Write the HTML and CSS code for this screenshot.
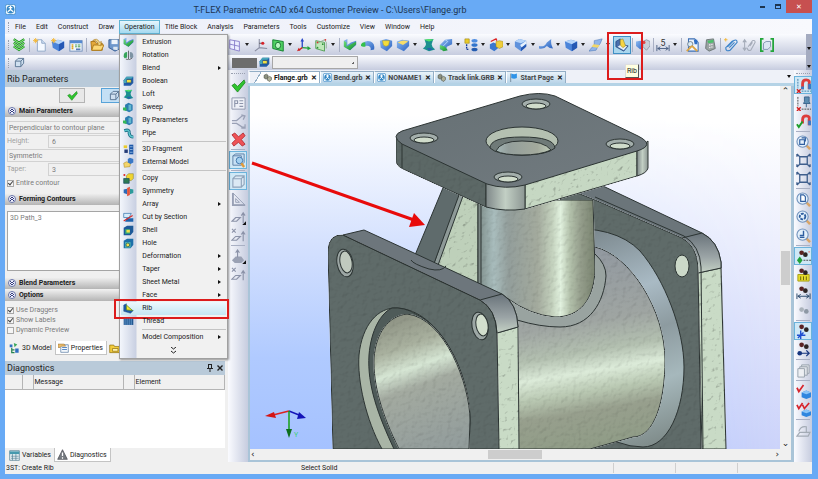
FILE: index.html
```html
<!DOCTYPE html>
<html lang="en">
<head>
  <meta charset="UTF-8" />
  <meta name="viewport" content="width=device-width, initial-scale=1.0" />
  <title>T-FLEX Parametric CAD x64 Customer Preview</title>
  <link rel="stylesheet" href="styles.css">
</head>
<body>

  <!-- icon sprite -->
  <svg class="sprite" width="0" height="0" aria-hidden="true">
    <defs>
      <linearGradient id="blueG" x1="0" y1="0" x2="1" y2="1"><stop offset="0" stop-color="#8fbcf2"/><stop offset="1" stop-color="#2a62c0"/></linearGradient>
      <linearGradient id="greenG" x1="0" y1="0" x2="1" y2="1"><stop offset="0" stop-color="#6fe07a"/><stop offset="1" stop-color="#0d8a2c"/></linearGradient>
    </defs>
    <symbol id="logo" viewBox="0 0 12 12"><rect x=".5" y=".5" width="11" height="11" rx="2" fill="#eef8ff" stroke="#4e93cc"/><circle cx="6" cy="6" r="4.300" fill="#3487c4"/><path d="M6 2v4M6 6L3 8.500M6 6l3 2.500M4 4h4" stroke="#fff" stroke-width="1.300" fill="none"/></symbol>
    <symbol id="chevrons" viewBox="0 0 16 16"><path d="M2 1.500l6 4 6-4M2 5.500l6 4 6-4M2 9.500l6 4 6-4" fill="none" stroke="#158a1b" stroke-width="2.600"/><path d="M2 1.500l6 4 6-4M2 5.500l6 4 6-4M2 9.500l6 4 6-4" fill="none" stroke="#8cec7e" stroke-width="1.200"/></symbol>
    <symbol id="newdoc" viewBox="0 0 16 16"><path d="M5 2h5l4 4v9H5z" fill="#f4f9ff" stroke="#8aa2c4"/><path d="M10 2v4h4" fill="#cfe0f4" stroke="#8aa2c4"/><path d="M3 0v6M0 3h6M1 1l4 4M5 1L1 5" stroke="#f4b52e"/></symbol>
    <symbol id="cube" viewBox="0 0 16 16"><path d="M1 4l7-2 7 2v7l-6 4-7-4z" fill="#4c85da"/><path d="M1 4l7-2 7 2-6 3z" fill="#b6d5fa"/><path d="M9 7l6-3v7l-6 4z" fill="#2558b4"/></symbol>
    <symbol id="cubecut" viewBox="0 0 16 16"><path d="M1 4l5-3 8 2v6l-6 6-7-5z" fill="#5f92dc"/><path d="M1 4l5-3 8 2-6 3z" fill="#b6d5fa"/><path d="M7 8l7-5v3l-5 5z" fill="#e6f1fd"/><path d="M8 11l6-4v3l-6 5z" fill="#2558b4"/></symbol>
    <symbol id="newcube" viewBox="0 0 16 16"><use href="#cube"/><path d="M3 0v6M0 3h6M1 1l4 4M5 1L1 5" stroke="#f4b52e"/></symbol>
    <symbol id="dialog" viewBox="0 0 16 16"><rect x="1" y="3" width="14" height="12" fill="#f1f6fd" stroke="#6d8cb8"/><path d="M1 4.500h14" stroke="#5589d0" stroke-width="3"/><path d="M3 8h2M3 10h2M3 12h2" stroke="#e0a51f" stroke-width="1.500"/><path d="M7 8h2M7 10h2M10 8h3M10 10h3" stroke="#4da052" stroke-width="1.200"/><path d="M8 13h5" stroke="#567bb5" stroke-width="2"/></symbol>
    <symbol id="open" viewBox="0 0 16 16"><path d="M1 4h5l1 2h7v8H2z" fill="#e4a93a" stroke="#a87414"/><path d="M4 8h12l-3 6H2z" fill="#fbd876" stroke="#a87414"/><path d="M3 3q5-4 8 2l2-1-1 5-4-2 1.500-1Q7 2 3 3z" fill="#f1d98c" stroke="#a87414" stroke-width=".7"/></symbol>
    <symbol id="save" viewBox="0 0 16 16"><path d="M1 2h13v10l-6 3-7-4z" fill="#6e97cb" stroke="#345a8f"/><path d="M4 2h7v5H4z" fill="#eef4fb"/><path d="M6 10h5v4l-5-1z" fill="#dbe5f0"/></symbol>
    <symbol id="plane" viewBox="0 0 16 16"><path d="M2 2l11 2v11L2 12z" fill="#eceeff" stroke="#8579c8"/><path d="M7.500 3v10.500M2 7l11 2.500" stroke="#8579c8"/></symbol>
    <symbol id="axes" viewBox="0 0 16 16"><path d="M6 1v10L1 15M6 11l9 1" fill="none" stroke="#888ca0" stroke-width="1.200"/><path d="M6 6h3" stroke="#444" stroke-width="1"/><circle cx="10" cy="6" r="1.800" fill="#d5222a"/></symbol>
    <symbol id="gplane" viewBox="0 0 16 16"><path d="M2 2l12 2v11L2 12z" fill="#4fd062" stroke="#0c7a28"/><ellipse cx="8" cy="8.500" rx="3" ry="3.600" fill="#b9f7c0" stroke="#0c6a28"/></symbol>
    <symbol id="triad" viewBox="0 0 16 16"><path d="M6 3v8" stroke="#2746c9" stroke-width="1.500"/><path d="M4 4l2-4 2 4z" fill="#2746c9"/><path d="M6 11l7 .5" stroke="#21a038" stroke-width="1.500"/><path d="M12 9l4 3-4 2z" fill="#21a038"/><path d="M6 11l-4 3" stroke="#c22" stroke-width="1.500"/><path d="M0 15l2-4 2 3z" fill="#c22"/></symbol>
    <symbol id="dots" viewBox="0 0 16 16"><path d="M2 3l10 2v10L2 12z" fill="#bfe8b9" stroke="#4e9d51"/><path d="M4 6l8-4 2 3v7" fill="none" stroke="#8cae8c"/><circle cx="4" cy="5" r="1" fill="#d33"/><circle cx="10" cy="7" r="1" fill="#2c8f3a"/><circle cx="4" cy="11" r="1" fill="#2c8f3a"/><circle cx="13" cy="2" r="1" fill="#d33"/></symbol>
    <symbol id="extrude" viewBox="0 0 16 16"><path d="M1 3l4-2v7l4-3 6-2v5l-7 6-7-4z" fill="url(#blueG)"/><path d="M1 3l3 2v5l5-3 6-3v3l-7 7-7-4z" fill="url(#greenG)"/></symbol>
    <symbol id="rotate" viewBox="0 0 16 16"><path d="M1 7q4-5 10-3 5 2 4 9l-4 1q1-6-6-5z" fill="url(#blueG)"/><path d="M0 7q2-3 5-2v5q-3 0-5-1z" fill="#35c04b"/></symbol>
    <symbol id="revolve" viewBox="0 0 16 16"><path d="M1 9q0-6 5-6v8l-4 1z" fill="#37a45a"/><path d="M15 9q0-6-5-6v8l4 1z" fill="#7d93a3"/><path d="M8 1v13M4 13l3 1M9 14l4-2" stroke="#333" fill="none"/></symbol>
    <symbol id="shieldY" viewBox="0 0 16 16"><path d="M1 3l7-2 7 2v6l-6 6-7-4z" fill="url(#blueG)"/><path d="M4 3h8l-1 5q-3 3-6 0z" fill="#f4dc3c" stroke="#aa9412" stroke-width=".5"/></symbol>
    <symbol id="shieldB" viewBox="0 0 16 16"><path d="M1 4l6-2 8 1v6l-6 6-8-4z" fill="url(#blueG)"/><path d="M2 5q5-3 9-2l3 1-6 4z" fill="#f7dd6a"/></symbol>
    <symbol id="shieldGray" viewBox="0 0 16 16"><path d="M0 4l5-1 4 2v4l-4 4-5-4z" fill="url(#blueG)"/><path d="M8 4l4-2 4 2v5l-4 5-4-4z" fill="#c9cfd8" stroke="#8e97a5"/><circle cx="9" cy="5" r="1.800" fill="#d44"/></symbol>
    <symbol id="loft" viewBox="0 0 16 16"><path d="M3 2l10-1-2 6q0 3 4 6l-7 2-7-3q5-4 3-7z" fill="#1c8f8f"/><path d="M2 2l6-1 6 1-6 2z" fill="#4fe06a"/><path d="M5 12l4-1 4 2-5 1z" fill="#2365ad"/></symbol>
    <symbol id="sweep" viewBox="0 0 16 16"><path d="M1 8l6-6 8-1v6l-6 3-1 4-7-1z" fill="url(#blueG)"/><path d="M1 8l6 2 3 4-5 1-4-3z" fill="url(#greenG)"/><path d="M7 2l3 2-5 5" fill="none" stroke="#bfe0ff"/></symbol>
    <symbol id="sweepmenu" viewBox="0 0 16 16"><path d="M3 4l5-3 6 3v8l-5 3-6-3z" fill="#2b7bb0"/><path d="M0 8h5v5l-5-1z" fill="#35b85a"/><path d="M8 4h4v8H8z" fill="#62b7cf"/></symbol>
    <symbol id="tree" viewBox="0 0 16 16"><path d="M1 1h5v5H1z" fill="#e9cb2c" stroke="#947c08" stroke-width=".6"/><path d="M3 7v6h3" fill="none" stroke="#113a9c" stroke-dasharray="2 1" stroke-width="1.500"/><ellipse cx="12" cy="3" rx="3.500" ry="2" fill="#4d8de1"/><ellipse cx="12" cy="8" rx="3.500" ry="2" fill="#3174cc"/><ellipse cx="12" cy="13" rx="3.500" ry="2" fill="#225bb0"/></symbol>
    <symbol id="cubes" viewBox="0 0 16 16"><path d="M1 7l4-2 5 2v5l-4 3-5-3z" fill="#3a77cf"/><path d="M8 4l4-1 4 1v6l-4 2-4-2z" fill="#efcd3c" stroke="#947c08" stroke-width=".5"/><path d="M2 4l6-3 1 2" stroke="#d22" fill="none" stroke-width="1.500"/></symbol>
    <symbol id="bend" viewBox="0 0 16 16"><path d="M0 9q6 2 9-4l5-4q-1 5 2 11-4 0-7-3-3 4-9 3z" fill="url(#blueG)"/></symbol>
    <symbol id="sheet" viewBox="0 0 16 16"><path d="M6 3l9-2-2 5-3 4-2 4-8 1 3-4 3-2z" fill="#8fb4e9" stroke="#4874b5" stroke-width=".6"/><path d="M5 7l7 1-2 3-7-1z" fill="#f2d768"/></symbol>
    <symbol id="boolean" viewBox="0 0 16 16"><path d="M5 1h10v9l-4 4H1V6z" fill="#225da9"/><path d="M5 5h7v5H5z" fill="#f1df42" stroke="#17427c"/><path d="M1 6l4-5h10l-3 3H5v6H1z" fill="#46a7b8"/></symbol>
    <symbol id="rib" viewBox="0 0 16 16"><path d="M1 3l4-2v7l10 3-4 4-10-3z" fill="#1f5ba7" stroke="#123a72" stroke-width=".5"/><path d="M5 3l9 8-9-1z" fill="#f6e531" stroke="#4a8a26" stroke-width="1"/></symbol>
    <symbol id="ribBig" viewBox="0 0 16 16"><path d="M1 4l5-3v6l9 2-5 6-9-5z" fill="#4a6fae" stroke="#203f77" stroke-width=".8"/><path d="M6 8l8 1-4 5-7-4z" fill="#e6eef6"/><path d="M6 2l3-1 3 8-3 2-3-3z" fill="#f6d443" stroke="#94811a" stroke-width=".6"/></symbol>
    <symbol id="thread" viewBox="0 0 16 16"><path d="M1 4h14v9H1z" fill="#20568f"/><path d="M3 4v9M6 4v9M9 4v9M12 4v9" stroke="#7db0e2"/></symbol>
    <symbol id="pipe" viewBox="0 0 16 16"><path d="M2 4q8-3 7 4 1 5 6 5" fill="none" stroke="#186f86" stroke-width="4.500"/><path d="M2 4q8-3 7 4 1 5 6 5" fill="none" stroke="#5fc6cf" stroke-width="2"/></symbol>
    <symbol id="fragment" viewBox="0 0 16 16"><path d="M9 1h6v14H9z" fill="#1c57a8"/><path d="M1 2h5v4H1z" fill="#e9cb2c"/><path d="M2 8h5v5H2z" fill="#253c78"/><path d="M10 4h4M10 8h4M10 12h4" stroke="#b9d7f3"/></symbol>
    <symbol id="external" viewBox="0 0 16 16"><path d="M1 9l4-2 6 2-1 5-8 1z" fill="#f3d56c" stroke="#a07e18" stroke-width=".7"/><path d="M7 3l3-2 5 2v5l-4 2-4-2z" fill="#3978c6"/></symbol>
    <symbol id="copy" viewBox="0 0 16 16"><path d="M5 4l3-3h7v7l-3 3H5z" fill="#efd533" stroke="#6e650e" stroke-width=".6"/><path d="M1 8h8v7H1z" fill="#2d7a54" stroke="#174c66"/><circle cx="2" cy="3" r="1.500" fill="#d22"/></symbol>
    <symbol id="symmetry" viewBox="0 0 16 16"><path d="M1 5l5-1v8l-5-2z" fill="#2c69b8"/><path d="M15 5l-5-1v8l5-2z" fill="#2c9a9a"/><path d="M6 3l4-2v12l-4 2z" fill="#e2543c"/></symbol>
    <symbol id="cut" viewBox="0 0 16 16"><path d="M1 2h11l-3 6H1z" fill="#d7ecfa" stroke="#2f70a8"/><path d="M5 9h10v5H3z" fill="#1d63ae"/><path d="M1 13L14 5" stroke="#d52a2a" stroke-width="1.800"/></symbol>
    <symbol id="shell" viewBox="0 0 16 16"><path d="M1 4l5-3h9v9l-4 5H1z" fill="#1d5a98"/><path d="M3 6h7v7H3z" fill="#2ea07c"/><path d="M5 7h5v4H5z" fill="#efe04a"/></symbol>
    <symbol id="hole" viewBox="0 0 16 16"><path d="M1 4l5-3h9v9l-4 5H1z" fill="#1d6fa8"/><path d="M3 6h8v8H3z" fill="#4fb9b2"/><circle cx="7" cy="10" r="2.700" fill="#f0e24c" stroke="#174c66"/></symbol>
    <symbol id="boxoutline" viewBox="0 0 16 16"><path d="M2 6l4-4h8v7l-4 5H2z" fill="#cfe0f0" stroke="#54708f" stroke-width="1.300"/><path d="M2 6h8v8M10 6l4-4" fill="none" stroke="#54708f" stroke-width="1.300"/></symbol>
    <symbol id="check" viewBox="0 0 16 16"><path d="M1 8l3-2 3 3 7-7 1 3-8 10z" fill="#2fc42f" stroke="#168216" stroke-width=".8"/></symbol>
    <symbol id="cross" viewBox="0 0 16 16"><path d="M1 3l3-2 4 4 5-4 2 3-4 4 4 5-3 2-4-4-5 4-2-3 4-4z" fill="#ee5257" stroke="#a91d24" stroke-width=".8"/></symbol>
    <symbol id="pe" viewBox="0 0 16 16"><path d="M1 2h14v12H1z" fill="#eef0f7" stroke="#8f96ac"/><path d="M4 12V5h3v3H4M9 5h4M9 8h4M9 11h4" fill="none" stroke="#8f96ac" stroke-width="1.200"/></symbol>
    <symbol id="branch" viewBox="0 0 16 16"><path d="M1 7h5l6-5h3M1 10h5l6 4h3M11 1l4 1-2 4M11 15h4v-4" fill="none" stroke="#9aa1b6" stroke-width="1.300"/></symbol>
    <symbol id="findbox" viewBox="0 0 16 16"><path d="M2 3h9v10H2zM2 3l3-2h9v9l-3 3" fill="#c8e1f5" stroke="#5d7fa5"/><circle cx="9" cy="8" r="3.500" fill="#a3d0f0" stroke="#4278ac"/><path d="M11 11l3 4" stroke="#e29a37" stroke-width="2.500"/></symbol>
    <symbol id="graybox" viewBox="0 0 16 16"><path d="M2 5h9v9H2zM2 5l3-3h9v9l-3 3M11 5l3-3" fill="#dbe9f4" stroke="#8fa3ba" stroke-width="1.200"/></symbol>
    <symbol id="triangle" viewBox="0 0 16 16"><path d="M2 1v13h13zM5 7v4h4z" fill="none" stroke="#98a0b5"/><path d="M2 1v13h13" fill="none" stroke="#98a0b5" stroke-width="2"/></symbol>
    <symbol id="planeup" viewBox="0 0 16 16"><path d="M1 12l4-4h5l-4 4zM13 14V4M11 6l2-3 2 3" fill="none" stroke="#8b92a8" stroke-width="1.200"/><path d="M16 12v4h-4z" fill="#111"/></symbol>
    <symbol id="planex" viewBox="0 0 16 16"><path d="M1 1l4 4M5 1L1 5M1 13l4-4h5l-4 4zM13 14V5M11 7l2-3 2 3" fill="none" stroke="#8b92a8" stroke-width="1.200"/></symbol>
    <symbol id="pyramid" viewBox="0 0 16 16"><path d="M1 12l4-4h6l3 4-3 3H4z" fill="#9aa1b4"/><path d="M7 9V2M5 4l2-3 2 3" fill="none" stroke="#8b92a8" stroke-width="1.200"/><path d="M16 12v4h-4z" fill="#111"/></symbol>
    <symbol id="docsearch" viewBox="0 0 16 16"><path d="M4 1h7l4 4v10H4z" fill="#eef5fd" stroke="#3c6fb4" stroke-width="1.200"/><path d="M10 2h4v5h-3z" fill="#2f6fc6"/><circle cx="6" cy="7" r="3" fill="#d8ecfa" stroke="#6c7b8b"/><path d="M8 9l6 6M2 15l6-6" stroke="#dda544" stroke-width="2.200"/></symbol>
    <symbol id="calc" viewBox="0 0 16 16"><path d="M4 2l8-1 2 11-7 3-4-3z" fill="#9aa2a2" stroke="#687272"/><path d="M5 3l7-1v3l-6 1z" fill="#4cbf6b"/><path d="M7 8l5-1M7 11l5-1" stroke="#eee" stroke-dasharray="1.500 1" stroke-width="1.500"/></symbol>
    <symbol id="clip" viewBox="0 0 16 16"><path d="M4 10l7-7q4-2 4 2l-8 9q-5 2-5-3l8-8M6 11l6-6" fill="none" stroke="#3d84c9" stroke-width="1.300"/><path d="M2 0v4M0 2h4" stroke="#f4b52e"/></symbol>
    <symbol id="clipgray" viewBox="0 0 16 16"><path d="M7 10l5-7q3-1 3 2l-5 9q-4 1-4-3M9 9l3-4M3 2v12M1 5l2-3 2 3M1 11l2 3 2-3" fill="none" stroke="#a5acb9" stroke-width="1.200"/></symbol>
    <symbol id="bracket" viewBox="0 0 16 16"><path d="M4 1H1v14h3M12 1h3v14h-3" fill="none" stroke="#22a53a" stroke-width="2"/><path d="M4 6l3-2h5v6l-3 3H4z" fill="#dce6f2" stroke="#7c90ac"/></symbol>
    <symbol id="magnet" viewBox="0 0 16 16"><path d="M7 12V6q0-4 4-4t3 4v6" fill="none" stroke="#dd3c3c" stroke-width="3"/><path d="M14.500 6v6M7 9v3" stroke="#3b79c4" stroke-width="3"/><path d="M2 1v10M6 14h10" stroke="#3a77a8" stroke-dasharray="2 1"/><path d="M1 12l4 4M5 12l-4 4" stroke="#d32020" stroke-width="1.500"/></symbol>
    <symbol id="pin" viewBox="0 0 16 16"><path d="M9 1h5v5l1 2H8l1-2zM11 8v4" fill="#5b8bb0" stroke="#3b658d"/><path d="M2 1v10M6 14h10" stroke="#444" stroke-dasharray="2 1"/><path d="M1 12l4 4M5 12l-4 4" stroke="#d32020" stroke-width="1.500"/></symbol>
    <symbol id="magnetok" viewBox="0 0 16 16"><path d="M7 10V6q0-4 4-4t3 4v6" fill="none" stroke="#dd3c3c" stroke-width="3"/><path d="M14.500 7v5" stroke="#3b79c4" stroke-width="3"/><path d="M1 11l2 3 4-6" fill="none" stroke="#1d9f2a" stroke-width="2"/></symbol>
    <symbol id="lens" viewBox="0 0 16 16"><path d="M10 10l5 5" stroke="#d9a568" stroke-width="2.600"/><circle cx="7" cy="7" r="6" fill="#e4f0fb" stroke="#7293bd" stroke-width="1.200"/></symbol>
    <symbol id="zoom" viewBox="0 0 16 16"><use href="#lens"/><path d="M4 5h5v5H4zM6 3h4v4" fill="none" stroke="#2f5ea0" stroke-width="1.200"/></symbol>
    <symbol id="zoompage" viewBox="0 0 16 16"><use href="#lens"/><path d="M5 3h3l2 2v5H5z" fill="#fff" stroke="#2f5ea0" stroke-width="1.200"/></symbol>
    <symbol id="zoomgear" viewBox="0 0 16 16"><use href="#lens"/><circle cx="7" cy="7" r="3" fill="none" stroke="#2f5ea0" stroke-width="2" stroke-dasharray="3 1"/></symbol>
    <symbol id="zoomback" viewBox="0 0 16 16"><use href="#lens"/><path d="M8 3v5H4M4 10h5" fill="none" stroke="#2f5ea0" stroke-width="1.500"/></symbol>
    <symbol id="fit" viewBox="0 0 16 16"><path d="M4 4h8v8H4zM1 1l3 3M15 1l-3 3M1 15l3-3M15 15l-3-3M1 4V1M15 1v3M1 12v3M15 15v-3" fill="none" stroke="#3f5f8d" stroke-width="1.400"/></symbol>
    <symbol id="snap" viewBox="0 0 16 16"><circle cx="6" cy="4" r="2.500" fill="#5b2323"/><circle cx="10" cy="6" r="2.500" fill="#2c2424"/><path d="M8 12h8" stroke="#444" stroke-dasharray="2 1"/><path d="M4 8l3 4-3 4-3-4z" fill="#21a23a"/><circle cx="14" cy="3" r="1" fill="#e48a8a"/></symbol>
    <symbol id="snapyel" viewBox="0 0 16 16"><path d="M2 8h12v7H2z" fill="#e7dc2a" stroke="#a89f16"/><circle cx="6" cy="4" r="2.500" fill="#5b2323"/><circle cx="10" cy="6" r="2.500" fill="#2c2424"/><path d="M5 10v4M8 10v4M11 10v4" stroke="#665f08"/></symbol>
    <symbol id="snapdim" viewBox="0 0 16 16"><circle cx="6" cy="4" r="2.500" fill="#5b2323"/><circle cx="10" cy="6" r="2.500" fill="#2c2424"/><path d="M1 9v6M15 9v6M2 12h12M5 10l-3 2 3 2M11 10l3 2-3 2" fill="none" stroke="#244468"/></symbol>
    <symbol id="snapgray" viewBox="0 0 16 16"><circle cx="6" cy="7" r="2.500" fill="#aab2ba"/><circle cx="11" cy="9" r="2.500" fill="#8d98a4"/></symbol>
    <symbol id="snapaxis" viewBox="0 0 16 16"><circle cx="6" cy="3" r="2.500" fill="#5b2323"/><circle cx="11" cy="6" r="2.500" fill="#2c2424"/><path d="M1 12h9M5 7v9M2 15l6-6" stroke="#1f4fd1" stroke-width="1.500"/></symbol>
    <symbol id="snaparrow" viewBox="0 0 16 16"><circle cx="6" cy="3" r="2.500" fill="#5b2323"/><circle cx="11" cy="5" r="2.500" fill="#2c2424"/><circle cx="4" cy="12" r="2.500" fill="#16357e"/><path d="M5 12h9M11 9l3 3-3 3" fill="none" stroke="#16357e" stroke-width="1.300"/></symbol>
    <symbol id="stack" viewBox="0 0 16 16"><path d="M6 2h8v9H6z" fill="#dfe3e8" stroke="#98a1ac"/><path d="M4 4h8v9H4z" fill="#dfe3e8" stroke="#98a1ac"/><path d="M2 6h7v9H2z" fill="#eef0f3" stroke="#98a1ac"/></symbol>
    <symbol id="verify" viewBox="0 0 16 16"><path d="M1 4l2 4 5-7" fill="none" stroke="#d6242c" stroke-width="1.800"/><path d="M6 9l5-2 5 2v5l-5 2-5-2z" fill="#2f86df"/><path d="M6 9l5-2 5 2-5 2z" fill="#8bc4f7"/></symbol>
    <symbol id="verify2" viewBox="0 0 16 16"><path d="M1 3l2 4 4-6M7 3l2 4 5-6" fill="none" stroke="#d6242c" stroke-width="1.800"/><path d="M6 10l5-2 5 2v4l-5 2-5-2z" fill="#2f86df"/><path d="M6 10l5-2 5 2-5 2z" fill="#8bc4f7"/></symbol>
    <symbol id="workplane" viewBox="0 0 16 16"><path d="M1 14l3-4h11l-2 4zM3 9q2-6 8-5v6" fill="none" stroke="#a3abb5" stroke-width="1.200"/></symbol>
    <symbol id="table" viewBox="0 0 16 16"><path d="M1 1h14v14H1z" fill="#edf5f8" stroke="#47778e"/><path d="M1 4h14" stroke="#4599ae" stroke-width="4"/><path d="M5 6v9M10 6v9M3 9h11M3 12h11" stroke="#4e7c90"/></symbol>
    <symbol id="warning" viewBox="0 0 16 16"><path d="M8 1l7 14H1z" fill="#777c82" stroke="#44484d"/><path d="M8 5v5M8 12v2" stroke="#fff" stroke-width="1.800"/></symbol>
    <symbol id="model" viewBox="0 0 16 16"><path d="M1 2h4v4H1zM9 8h5v6H9z" fill="#2f6fc0"/><path d="M4 7v7h4M4 10h4" fill="none" stroke="#27844f" stroke-width="1.800"/><path d="M7 0l5 2-4 4z" fill="#3ba65b"/></symbol>
    <symbol id="props" viewBox="0 0 16 16"><path d="M4 4h11v11H4z" fill="#f4f8fd" stroke="#54779f"/><path d="M6 8h7M6 11h7" stroke="#5b8bc5" stroke-width="1.500"/><path d="M0 3h9l2 3H5L3 8H0z" fill="#eabc6c" stroke="#93682a" stroke-width=".7"/></symbol>
    <symbol id="library" viewBox="0 0 16 16"><path d="M1 3h6l1 2h7v9H1z" fill="#f3cd3c" stroke="#8d6e0c"/><path d="M5 8h8v4H5z" fill="#fff3ae" stroke="#8d6e0c"/></symbol>
    <symbol id="parts" viewBox="0 0 16 16"><path d="M2 4l4-2 3 2v4l-3 3-4-2z" fill="#8d9180" stroke="#44483c"/><path d="M8 8l4-2 3 2v4l-3 3-4-2z" fill="#b0b19a" stroke="#44483c"/></symbol>
    <symbol id="flag" viewBox="0 0 16 16"><path d="M3 1v15" stroke="#6d8295" stroke-width="1.500"/><path d="M4 1q5 2 10 0v8q-5 2-10 0z" fill="#2e93e8"/></symbol>
  </svg>

  <header class="titlebar">
    <svg class="icon small"><use href="#logo"/></svg>
    <h1>T-FLEX Parametric CAD x64 Customer Preview - C:\Users\Flange.grb</h1>
    <div class="window-buttons">
      <button type="button" aria-label="Minimize"><i class="min"></i></button>
      <button type="button" aria-label="Maximize"><i class="max"></i></button>
      <button type="button" class="close" aria-label="Close">✕</button>
    </div>
  </header>

  <nav class="menubar">
    <i class="grip"></i>
    <button type="button">File</button>
    <button type="button">Edit</button>
    <button type="button">Construct</button>
    <button type="button">Draw</button>
    <div class="menu-holder">
      <button type="button" class="open">Operation</button>
      <div class="menu">
        <button type="button"><svg class="icon"><use href="#extrude"/></svg>Extrusion</button>
        <button type="button"><svg class="icon"><use href="#revolve"/></svg>Rotation</button>
        <button type="button" class="sub">Blend</button>
        <button type="button"><svg class="icon"><use href="#boolean"/></svg>Boolean</button>
        <button type="button"><svg class="icon"><use href="#loft"/></svg>Loft</button>
        <button type="button"><svg class="icon"><use href="#sweepmenu"/></svg>Sweep</button>
        <button type="button"><svg class="icon"><use href="#sweepmenu"/></svg>By Parameters</button>
        <button type="button"><svg class="icon"><use href="#pipe"/></svg>Pipe</button>
        <hr>
        <button type="button"><svg class="icon"><use href="#fragment"/></svg>3D Fragment</button>
        <button type="button"><svg class="icon"><use href="#external"/></svg>External Model</button>
        <hr>
        <button type="button"><svg class="icon"><use href="#copy"/></svg>Copy</button>
        <button type="button"><svg class="icon"><use href="#symmetry"/></svg>Symmetry</button>
        <button type="button" class="sub">Array</button>
        <button type="button"><svg class="icon"><use href="#cut"/></svg>Cut by Section</button>
        <button type="button"><svg class="icon"><use href="#shell"/></svg>Shell</button>
        <button type="button"><svg class="icon"><use href="#hole"/></svg>Hole</button>
        <button type="button" class="sub">Deformation</button>
        <button type="button" class="sub">Taper</button>
        <button type="button" class="sub">Sheet Metal</button>
        <button type="button" class="sub">Face</button>
        <button type="button" class="current"><svg class="icon"><use href="#rib"/></svg>Rib</button>
        <button type="button"><svg class="icon"><use href="#thread"/></svg>Thread</button>
        <hr>
        <button type="button" class="sub">Model Composition</button>
        <button type="button" class="more" aria-label="More"><svg width="5" height="7" viewBox="0 0 5 7"><path d="M0 0l2.500 2L5 0M0 4l2.500 2L5 4" fill="none" stroke="#222"/></svg></button>
      </div>
    </div>
    <button type="button">Title Block</button>
    <button type="button">Analysis</button>
    <button type="button">Parameters</button>
    <button type="button">Tools</button>
    <button type="button">Customize</button>
    <button type="button">View</button>
    <button type="button">Window</button>
    <button type="button">Help</button>
  </nav>

  <div class="toolbar main-tools">
    <i class="grip"></i>
    <button type="button"><svg class="icon"><use href="#chevrons"/></svg></button>
    <i class="sep"></i>
    <button type="button"><svg class="icon"><use href="#newdoc"/></svg></button>
    <button type="button"><svg class="icon"><use href="#newcube"/></svg></button>
    <button type="button"><svg class="icon"><use href="#dialog"/></svg></button>
    <i class="sep"></i>
    <button type="button"><svg class="icon"><use href="#open"/></svg></button>
    <button type="button"><svg class="icon"><use href="#save"/></svg></button>
    <i class="sep"></i>
    <button type="button"><svg class="icon"><use href="#copy"/></svg></button>
    <button type="button"><svg class="icon"><use href="#clip"/></svg></button>
    <button type="button"><svg class="icon"><use href="#table"/></svg></button>
    <button type="button"><svg class="icon"><use href="#docsearch"/></svg></button>
    <button type="button" class="drop"><svg class="icon"><use href="#boxoutline"/></svg></button>
    <i class="sep"></i>
    <button type="button" class="drop"><svg class="icon"><use href="#plane"/></svg></button>
    <button type="button"><svg class="icon"><use href="#axes"/></svg></button>
    <button type="button" class="drop"><svg class="icon"><use href="#gplane"/></svg></button>
    <button type="button"><svg class="icon"><use href="#triad"/></svg></button>
    <button type="button" class="drop"><svg class="icon"><use href="#dots"/></svg></button>
    <i class="sep"></i>
    <button type="button"><svg class="icon"><use href="#extrude"/></svg></button>
    <button type="button"><svg class="icon"><use href="#rotate"/></svg></button>
    <button type="button"><svg class="icon"><use href="#shieldY"/></svg></button>
    <button type="button" class="drop"><svg class="icon"><use href="#shieldB"/></svg></button>
    <button type="button"><svg class="icon"><use href="#loft"/></svg></button>
    <button type="button" class="drop"><svg class="icon"><use href="#sweep"/></svg></button>
    <button type="button" class="drop"><svg class="icon"><use href="#tree"/></svg></button>
    <button type="button" class="drop"><svg class="icon"><use href="#cubes"/></svg></button>
    <button type="button" class="drop"><svg class="icon"><use href="#cubecut"/></svg></button>
    <button type="button" class="drop"><svg class="icon"><use href="#bend"/></svg></button>
    <button type="button" class="drop"><svg class="icon"><use href="#cube"/></svg></button>
    <button type="button" class="drop"><svg class="icon"><use href="#sheet"/></svg></button>
    <div class="rib-tool">
      <button type="button" class="on" aria-describedby="ribTip"><svg class="icon"><use href="#ribBig"/></svg></button>
      <div class="callout"></div>
      <span class="tooltip" id="ribTip">Rib</span>
    </div>
    <i class="sep"></i>
    <button type="button"><svg class="icon"><use href="#shieldGray"/></svg></button>
    <i class="sep"></i>
    <button type="button" class="drop"><svg class="icon" viewBox="0 0 16 16"><path d="M1 8v7M15 8v7M2 12h12M5 10l-3 2 3 2M11 10l3 2-3 2" fill="none" stroke="#44597e"/><text x="5" y="9" font-size="10" fill="#333">5</text></svg></button>
    <i class="sep"></i>
    <button type="button"><svg class="icon"><use href="#docsearch"/></svg></button>
    <button type="button"><svg class="icon"><use href="#calc"/></svg></button>
    <i class="sep"></i>
    <button type="button"><svg class="icon"><use href="#clip"/></svg></button>
    <button type="button"><svg class="icon"><use href="#clipgray"/></svg></button>
    <button type="button"><svg class="icon"><use href="#bracket"/></svg></button>
    <button type="button" class="overflow" aria-label="Toolbar options"></button>
  </div>

  <div class="toolbar sub-tools">
    <i class="grip"></i>
    <button type="button"><svg class="icon small"><use href="#boxoutline"/></svg></button>
    <div class="style-tools">
      <span class="swatch"></span>
      <svg class="icon small"><use href="#boolean"/></svg>
      <select aria-label="Material"><option></option></select>
    </div>
    <button type="button" class="overflow" aria-label="Toolbar options"></button>
  </div>

  <main class="workspace">
    <aside class="dock">
      <section class="panel properties">
        <h2>Rib Parameters</h2>
        <div class="actions">
          <button type="button" aria-label="OK"><svg class="icon small"><use href="#check"/></svg></button>
          <button type="button" class="on" aria-label="Preview"><svg class="icon small"><use href="#boxoutline"/></svg></button>
        </div>
        <h3><svg class="fold" viewBox="0 0 8 8"><circle cx="4" cy="4" r="3.500"/><path d="M2 4l2-2 2 2M2 6l2-2 2 2"/></svg>Main Parameters</h3>
        <div class="fields">
          <select aria-label="Direction"><option>Perpendicular to contour plane</option></select>
          <div class="field"><label for="height">Height:</label><input id="height" type="text" value="6"></div>
          <select aria-label="Side"><option>Symmetric</option></select>
          <div class="field"><label for="taper">Taper:</label><input id="taper" type="text" value="3"></div>
          <label class="check"><input type="checkbox" checked>Entire contour</label>
        </div>
        <h3><svg class="fold" viewBox="0 0 8 8"><circle cx="4" cy="4" r="3.500"/><path d="M2 4l2-2 2 2M2 6l2-2 2 2"/></svg>Forming Contours</h3>
        <ul class="contours"><li>3D Path_3</li></ul>
        <h3><svg class="fold" viewBox="0 0 8 8"><circle cx="4" cy="4" r="3.500"/><path d="M2 2l2 2 2-2M2 4l2 2 2-2"/></svg>Blend Parameters</h3>
        <h3><svg class="fold" viewBox="0 0 8 8"><circle cx="4" cy="4" r="3.500"/><path d="M2 4l2-2 2 2M2 6l2-2 2 2"/></svg>Options</h3>
        <div class="options">
          <label class="check"><input type="checkbox" checked>Use Draggers</label>
          <label class="check"><input type="checkbox" checked>Show Labels</label>
          <label class="check"><input type="checkbox">Dynamic Preview</label>
        </div>
        <div class="panel-tabs">
          <button type="button"><svg class="icon small"><use href="#model"/></svg>3D Model</button>
          <button type="button" class="active"><svg class="icon small"><use href="#props"/></svg>Properties</button>
          <button type="button"><svg class="icon small"><use href="#library"/></svg>Library</button>
        </div>
      </section>

      <section class="panel diagnostics">
        <h2>Diagnostics
          <span class="panel-buttons">
            <svg width="6" height="8" viewBox="0 0 6 8"><path d="M1.500 0v4M4.500 0v4M1 .5h4M0 4.500h6M3 5v3" stroke="#222" fill="none"/></svg>
            <svg width="6" height="6" viewBox="0 0 6 6"><path d="M.5 .5l5 5M5.500 .5l-5 5" stroke="#222" stroke-width="1.400"/></svg>
          </span>
        </h2>
        <table>
          <colgroup><col class="c1"><col class="c2"><col class="c3"><col class="c2"><col></colgroup>
          <thead><tr><th></th><th></th><th>Message</th><th></th><th>Element</th></tr></thead>
        </table>
        <div class="messages"></div>
        <div class="panel-tabs">
          <button type="button"><svg class="icon small"><use href="#table"/></svg>Variables</button>
          <button type="button" class="active"><svg class="icon small"><use href="#warning"/></svg>Diagnostics</button>
        </div>
      </section>
    </aside>

    <div class="side-tools left">
      <i class="grip"></i>
      <button type="button"><svg class="icon"><use href="#check"/></svg></button>
      <button type="button"><svg class="icon"><use href="#pe"/></svg></button>
      <button type="button"><svg class="icon"><use href="#branch"/></svg></button>
      <button type="button"><svg class="icon"><use href="#cross"/></svg></button>
      <i class="sep"></i>
      <button type="button" class="on"><svg class="icon"><use href="#findbox"/></svg></button>
      <i class="sep"></i>
      <button type="button" class="on"><svg class="icon"><use href="#graybox"/></svg></button>
      <button type="button"><svg class="icon"><use href="#triangle"/></svg></button>
      <button type="button"><svg class="icon"><use href="#planeup"/></svg></button>
      <button type="button"><svg class="icon"><use href="#planex"/></svg></button>
      <i class="sep"></i>
      <button type="button"><svg class="icon"><use href="#pyramid"/></svg></button>
      <button type="button"><svg class="icon"><use href="#planex"/></svg></button>
    </div>

    <section class="document">
      <div class="tabs">
        <button type="button" class="active"><svg class="icon tiny"><use href="#parts"/></svg>Flange.grb<b>✕</b></button>
        <button type="button"><svg class="icon tiny"><use href="#logo"/></svg>Bend.grb<b>✕</b></button>
        <button type="button"><svg class="icon tiny"><use href="#logo"/></svg>NONAME1<b>✕</b></button>
        <button type="button"><svg class="icon tiny"><use href="#parts"/></svg>Track link.GRB<b>✕</b></button>
        <button type="button"><svg class="icon tiny"><use href="#flag"/></svg>Start Page<b>✕</b></button>
        <i class="caret"></i>
      </div>

      <div class="view">
        <svg class="scene" viewBox="250 86 530 363" preserveAspectRatio="xMidYMid slice" role="img" aria-label="3D view of the flange">
          <defs>
            <linearGradient id="sky" x1="0" y1="0" x2="0" y2="1"><stop offset=".08" stop-color="#fff"/><stop offset=".45" stop-color="#d3e0fe"/><stop offset=".75" stop-color="#b0caff"/><stop offset="1" stop-color="#a5c2ff"/></linearGradient>
            <linearGradient id="skyRight" x1="0" y1="0" x2="0" y2="1"><stop offset=".1" stop-color="#fff"/><stop offset=".6" stop-color="#e3e6fc"/><stop offset="1" stop-color="#ccd3fa"/></linearGradient>
            <linearGradient id="neck" x1="480" y1="0" x2="595" y2="0" gradientUnits="userSpaceOnUse"><stop offset="0" stop-color="#82928f"/><stop offset=".12" stop-color="#a9bdbd"/><stop offset=".25" stop-color="#939e9b"/><stop offset=".5" stop-color="#a3aa9d"/><stop offset=".63" stop-color="#c4d2be"/><stop offset=".7" stop-color="#e2f2df"/><stop offset=".78" stop-color="#b4c2ac"/><stop offset=".88" stop-color="#939c8a"/><stop offset="1" stop-color="#79836f"/></linearGradient>
            <linearGradient id="body" x1="570" y1="255" x2="602" y2="449" gradientUnits="userSpaceOnUse"><stop offset="0" stop-color="#9299a0"/><stop offset=".35" stop-color="#9fa5a2"/><stop offset=".5" stop-color="#b3c0b0"/><stop offset=".6" stop-color="#dcebd9"/><stop offset=".7" stop-color="#b9c8b2"/><stop offset=".8" stop-color="#979f8d"/><stop offset="1" stop-color="#8f9c86"/></linearGradient>
            <linearGradient id="bore" x1="395" y1="318" x2="440" y2="449" gradientUnits="userSpaceOnUse"><stop offset="0" stop-color="#8f9485"/><stop offset=".22" stop-color="#a9b19f"/><stop offset=".38" stop-color="#d6e6d4"/><stop offset=".52" stop-color="#a3aaa0"/><stop offset="1" stop-color="#939d9c"/></linearGradient>
            <linearGradient id="flare" x1="600" y1="230" x2="680" y2="440" gradientUnits="userSpaceOnUse"><stop offset="0" stop-color="#7d8a90"/><stop offset=".3" stop-color="#a9bac4"/><stop offset=".5" stop-color="#8d9ba0"/><stop offset=".72" stop-color="#a6b8bc"/><stop offset="1" stop-color="#7c8886"/></linearGradient>
            <linearGradient id="corner"><stop offset="0" stop-color="#7f8889"/><stop offset=".5" stop-color="#c2cfc4"/><stop offset="1" stop-color="#8c9693"/></linearGradient>
            <linearGradient id="cornerV" x1="0" y1="0" x2="0" y2="1"><stop offset="0" stop-color="#69737a"/><stop offset=".6" stop-color="#9ba4a6"/><stop offset="1" stop-color="#c5d2c5"/></linearGradient>
            <linearGradient id="topFace" x1="0" y1="0" x2="1" y2="1"><stop offset="0" stop-color="#667074"/><stop offset="1" stop-color="#727b80"/></linearGradient>
            <filter id="rough" x="0" y="0" width="100%" height="100%" color-interpolation-filters="sRGB">
              <feTurbulence type="fractalNoise" baseFrequency=".2" numOctaves="3" seed="4" result="n"/>
              <feDiffuseLighting in="n" surfaceScale="1.100" diffuseConstant="1.250" lighting-color="#fff" result="l"><feDistantLight azimuth="230" elevation="60"/></feDiffuseLighting>
              <feBlend in="SourceGraphic" in2="l" mode="multiply" result="b"/>
              <feComposite in="b" in2="SourceGraphic" operator="in"/>
            </filter>
            <filter id="grain" x="0" y="0" width="100%" height="100%" color-interpolation-filters="sRGB">
              <feTurbulence type="fractalNoise" baseFrequency=".2" numOctaves="2" seed="9" result="n"/>
              <feDiffuseLighting in="n" surfaceScale=".35" diffuseConstant="1.150" lighting-color="#fff" result="l"><feDistantLight azimuth="230" elevation="60"/></feDiffuseLighting>
              <feBlend in="SourceGraphic" in2="l" mode="multiply" result="b"/>
              <feComposite in="b" in2="SourceGraphic" operator="in"/>
            </filter>
            <linearGradient id="fadeIn" x1="0" x2="1"><stop offset=".35" stop-color="#fff" stop-opacity="0"/><stop offset="1" stop-color="#fff"/></linearGradient>
            <mask id="rightMask"><rect x="250" y="86" width="530" height="363" fill="url(#fadeIn)"/></mask>
          </defs>
          <rect x="250" y="86" width="530" height="363" fill="url(#sky)"/>
          <rect x="250" y="86" width="530" height="363" fill="url(#skyRight)" mask="url(#rightMask)"/>

          <g class="edges">
            <!-- rear flange -->
            <path d="M593 182L605 187 702 233Q718 241 721 262L726 449H701L698 267 570 200z" fill="#6b757a"/>
            <path d="M698 273L721 268 726 449H702z" fill="#c9dbc6" filter="url(#rough)"/>
            <path d="M682 238L702 233Q718 241 721 262L721 268 698 273Q697 248 682 238z" fill="url(#cornerV)"/>
            <path d="M560 186L595 200 682 238Q697 246 698 267L701 449H560z" fill="#5f6b69" filter="url(#grain)"/>
            <path d="M595 197L684 236Q700 246 701 267L703 449" fill="none"/>
            <ellipse cx="682" cy="266" rx="7" ry="11" fill="#cbd8c8"/>
            <!-- body -->
            <path d="M560 229Q615 225 640 251C665 280 684 330 684 367C684 410 668 447 643 447Q630 447 617 442L560 449z" fill="url(#flare)"/>
            <path d="M500 247H595C630 255 665 310 665 360C665 400 655 437 633 437L590 449H500z" fill="url(#body)" filter="url(#grain)"/>
            <!-- neck -->
            <path d="M560 254H595Q606 264 606 276C604 302 590 327 560 327Q540 327 517 320L480 290V254z" fill="#99a3a0" stroke="none"/>
            <path d="M595 254Q606 264 606 276C604 302 590 327 560 327Q540 327 517 320" fill="none"/>
            <path d="M478 200H593L595 270C594 300 580 317 555 317Q530 315 507 298L478 284z" fill="url(#neck)" filter="url(#grain)"/>
            <!-- rib -->
            <path d="M462 194L478 200V284L430 264z" fill="#bed0ba" filter="url(#rough)"/>
            <path d="M478 200h3v86l-3-2z" fill="#7c8885"/>
            <path d="M458 194L463 196 437 268 432 269z" fill="#8e9a98"/>
            <path d="M445 183L459 195 432 269 413 260z" fill="#5f6b6c"/>
            <!-- front flange -->
            <path d="M343 235L364 230 414 253 502 294Q517 303 518 327L519 449H499L497 333 480 300z" fill="#6d767c"/>
            <path d="M497 333L518 327 519 449H499z" fill="#c9dbc6" filter="url(#rough)"/>
            <path d="M480 300L502 294Q517 303 518 327L497 333Q496 310 480 300z" fill="url(#cornerV)"/>
            <path d="M328 250Q329 234 343 235L480 300Q496 309 497 333L499 449H333z" fill="#5f6b69" filter="url(#grain)"/>
            <path d="M343 235L480 300Q496 309 497 333" fill="none"/>
            <path d="M411 260Q413 264 429 269 442 272 446 266" fill="none"/>
            <path d="M382 449C366 420 357 380 359 355C362 325 378 307 397 308C440 310 470 375 470 420L469 449z" fill="#a9b5a6"/>
            <path d="M394 449C378 415 367 385 369 355C371 330 381 313 392 308Q404 307 416 314C450 330 470 385 470 420L469 449z" fill="#4f5b59"/>
            <path d="M399 449C382 415 373 385 374 358C376 333 388 316 407 314C445 318 470 385 470 420L469 449z" fill="url(#bore)" filter="url(#grain)"/>
            <ellipse cx="345" cy="263" rx="8" ry="14" transform="rotate(-10 345 263)" fill="#9da7a5"/>
            <ellipse cx="346" cy="262" rx="6" ry="11" transform="rotate(-10 346 262)" fill="#c0cabf"/>
            <ellipse cx="480" cy="326" rx="8" ry="14" transform="rotate(-10 480 326)" fill="#9da7a5"/>
            <ellipse cx="482" cy="325" rx="6" ry="11" transform="rotate(-10 482 325)" fill="#d2decd"/>
            <!-- top flange -->
            <path d="M396 138V160Q396 166 403 169L486 207V182z" fill="#5c6866" filter="url(#grain)"/>
            <path d="M402 144V168" fill="none"/>
            <path d="M525 183L637 150V176L525 209z" fill="#c6d8c3" filter="url(#rough)"/>
            <path d="M637 150L648 141V168Q647 173 637 176z" fill="url(#corner)"/>
            <path d="M486 182H525V209Q505 212 486 207z" fill="url(#corner)"/>
            <path d="M402 131L520 96Q540 91 555 96L638 136Q656 145 637 151L525 185Q505 190 487 184L402 144Q390 136 402 131z" fill="url(#topFace)"/>
            <ellipse cx="522" cy="141" rx="36" ry="14" fill="#b4c0b1"/>
            <path d="M490 148Q490 137 522 137T555 148Q547 155 522 155T490 148z" fill="#6f7a78"/>
            <path d="M496 151Q500 141 522 141T551 150Q540 155 522 155T496 151z" fill="url(#neck)"/>
            <g fill="#a3aeab">
              <ellipse cx="424" cy="138" rx="14" ry="5"/><ellipse cx="536" cy="104" rx="14" ry="5"/><ellipse cx="620" cy="144" rx="14" ry="5"/><ellipse cx="508" cy="177" rx="14" ry="5"/>
            </g>
            <g fill="#d0dccb">
              <ellipse cx="424" cy="140" rx="10" ry="3"/><ellipse cx="536" cy="106" rx="10" ry="3"/><ellipse cx="620" cy="146" rx="10" ry="3"/><ellipse cx="508" cy="179" rx="10" ry="3"/>
            </g>
          </g>

          <path d="M252 163L414 220" stroke="#e80b0b" stroke-width="3"/>
          <path d="M425 225L409 227 414 213z" fill="#e80b0b"/>

          <path d="M289 411L273 415" stroke="#d22" stroke-width="1.500"/><path d="M265 416l9-4 2 6z" fill="#d41414"/>
          <path d="M289 411L299 415" stroke="#1414b8" stroke-width="1.500"/><path d="M306 418l-9 1 2-7z" fill="#1414b8"/>
          <path d="M289 411V430" stroke="#14a014" stroke-width="1.500"/><path d="M289 438l-3-9h6z" fill="#0c6e1c"/>
          <text x="294" y="437" font-size="7" fill="#3fd07c">Y</text>
        </svg>
        <div class="scroll vertical"><span>⌃</span><i></i><span>⌄</span></div>
        <div class="scroll horizontal"><span>‹</span><i></i><span>›</span></div>
      </div>
    </section>

    <div class="side-tools right">
      <i class="grip"></i>
      <button type="button" class="on"><svg class="icon"><use href="#magnet"/></svg></button>
      <button type="button"><svg class="icon"><use href="#pin"/></svg></button>
      <button type="button"><svg class="icon"><use href="#magnetok"/></svg></button>
      <i class="sep"></i>
      <button type="button"><svg class="icon"><use href="#zoom"/></svg></button>
      <button type="button"><svg class="icon"><use href="#fit"/></svg></button>
      <button type="button"><svg class="icon"><use href="#fit"/></svg></button>
      <i class="sep"></i>
      <button type="button"><svg class="icon"><use href="#zoompage"/></svg></button>
      <button type="button"><svg class="icon"><use href="#zoomgear"/></svg></button>
      <button type="button"><svg class="icon"><use href="#zoomback"/></svg></button>
      <i class="sep"></i>
      <button type="button" class="on"><svg class="icon"><use href="#snap"/></svg></button>
      <button type="button"><svg class="icon"><use href="#snapyel"/></svg></button>
      <button type="button"><svg class="icon"><use href="#snapdim"/></svg></button>
      <button type="button"><svg class="icon"><use href="#snapgray"/></svg></button>
      <i class="sep"></i>
      <button type="button" class="on"><svg class="icon"><use href="#snapaxis"/></svg></button>
      <button type="button"><svg class="icon"><use href="#snaparrow"/></svg></button>
      <i class="sep"></i>
      <button type="button"><svg class="icon"><use href="#stack"/></svg></button>
      <i class="sep"></i>
      <button type="button"><svg class="icon"><use href="#verify"/></svg></button>
      <button type="button"><svg class="icon"><use href="#verify2"/></svg></button>
      <i class="sep"></i>
      <button type="button"><svg class="icon"><use href="#workplane"/></svg></button>
    </div>
  </main>

  <footer class="statusbar">
    <span class="mode">3ST: Create Rib</span>
    <span class="hint">Select Solid</span>
    <span class="cell"></span>
    <span class="cell"></span>
    <span class="cell last"></span>
  </footer>

</body>
</html>
```

FILE: styles.css
```css
* {
  box-sizing: border-box;
}

body {
  margin: 0;
  padding: 0 6px 5px 5px;
  min-height: 100vh;
  display: flex;
  flex-direction: column;
  background-color: #68aaf5;
  font-family: Roboto, 'Liberation Sans', sans-serif;
  font-size: 7px;
  line-height: 12px;
  color: #1a1a1a;
}

button,
input,
select {
  font: inherit;
  color: inherit;
  margin: 0;
  padding: 0;
  border: 0;
  border-radius: 0;
  background: none;
}

button {
  display: flex;
  align-items: center;
  white-space: nowrap;
}

h1, h2, h3, ul {
  margin: 0;
  padding: 0;
  font-weight: normal;
}

.sprite {
  position: absolute;
}

.icon {
  width: 15px;
  height: 15px;
  flex: none;
}

.icon.small {
  width: 11px;
  height: 11px;
}

.icon.tiny {
  width: 9px;
  height: 9px;
}

/* title bar */
.titlebar {
  display: flex;
  align-items: center;
  height: 19px;
}

.titlebar h1 {
  flex: 1;
  padding-right: 110px;
  text-align: center;
  font-size: 9px;
  color: #1d3550;
}

.window-buttons {
  display: flex;
  align-self: flex-start;
}

.window-buttons button {
  width: 16px;
  height: 13px;
  justify-content: center;
}

.window-buttons .close {
  width: 26px;
  background-color: #c75050;
  color: #fff;
}

.min {
  width: 5px;
  height: 2px;
  background-color: #1d3550;
}

.max {
  width: 6px;
  height: 5px;
  border: 1px solid #1d3550;
  border-top-width: 2px;
}

/* menu bar */
.menubar {
  display: flex;
  align-items: center;
  height: 15px;
  padding-left: 3px;
  background: linear-gradient(90deg, #eceff9, #f8f9fd);
}

.menubar > button,
.menu-holder > button {
  height: 14px;
  padding: 0 4px;
  border: 1px solid transparent;
}

.menu-holder {
  position: relative;
}

.menu-holder > .open {
  border-color: #62b4d4;
  background: linear-gradient(#e6f5fc, #a5daf0);
}

.grip {
  flex: none;
  width: 1px;
  height: 10px;
  margin-right: 1px;
  border-left: 1px dotted #9aa0b0;
}

.menu {
  position: absolute;
  z-index: 10;
  top: 14px;
  left: 0;
  width: 109px;
  padding: 1px;
  border: 1px solid #a0a0a0;
  background: linear-gradient(90deg, #f3f6fc, #c9d0e2 16px, #f1f1f1 17px);
  box-shadow: 1px 1px 2px rgba(0, 0, 0, 0.4);
}

.menu button {
  position: relative;
  width: 100%;
  height: 13px;
  padding-left: 21px;
}

.menu .icon {
  position: absolute;
  left: 2px;
  width: 11px;
  height: 11px;
}

.menu .sub::after {
  content: '';
  position: absolute;
  right: 5px;
  border: 2px solid transparent;
  border-left: 3px solid #111;
  border-right: 0;
}

.menu hr {
  height: 1px;
  margin: 1px 0 1px 21px;
  border: 0;
  background-color: #c4c4c4;
}

.menu .current {
  background: linear-gradient(#edf8fd, #c5e6f3);
}

.menu .current::before {
  content: '';
  position: absolute;
  top: -3px;
  right: -3px;
  bottom: -4px;
  left: -7px;
  border: 2px solid #dc1c1c;
}

.menu .more {
  justify-content: center;
  padding: 0;
}

/* toolbars */
.toolbar {
  display: flex;
  align-items: center;
  padding-left: 3px;
  background: linear-gradient(#fbfcff, #c6ccdf);
}

.main-tools {
  height: 21px;
}

.sub-tools {
  height: 15px;
}

.toolbar button {
  flex: none;
  width: 18px;
  height: 18px;
  justify-content: center;
}

.main-tools .icon {
  width: 14px;
  height: 14px;
}

.toolbar .sep {
  flex: none;
  width: 1px;
  height: 14px;
  margin: 0 1px;
  background-color: #a9b0c4;
}

.toolbar .drop {
  width: 25px;
  justify-content: flex-start;
  padding-left: 1px;
}

.toolbar .drop::after {
  content: '';
  margin-left: 3px;
  border: 2px solid transparent;
  border-top: 3px solid #222;
  border-bottom: 0;
}

.toolbar .overflow {
  width: 6px;
  height: 100%;
  margin-left: auto;
  background-color: #a4abc0;
}

.overflow::after {
  content: '';
  margin-top: 8px;
  border: 2px solid transparent;
  border-top: 3px solid #111;
  border-bottom: 0;
}

.rib-tool {
  position: relative;
}

.toolbar .on {
  width: 18px;
  border: 1px solid #3e8fc4;
  background-color: #a9d6ee;
}

.callout {
  position: absolute;
  z-index: 5;
  top: -4px;
  left: -6px;
  width: 36px;
  height: 48px;
  border: 2px solid #dc1c1c;
}

.tooltip {
  position: absolute;
  z-index: 6;
  top: 28px;
  left: 12px;
  padding: 0 1px;
  border: 1px solid #555;
  border-top-color: #ddd;
  border-left-color: #ddd;
  background-color: #ffffe1;
}

.style-tools {
  display: flex;
  align-items: center;
  gap: 2px;
  margin-left: 204px;
}

.swatch {
  width: 25px;
  height: 10px;
  background-color: #6d6d6d;
}

.style-tools select {
  appearance: none;
  width: 86px;
  height: 13px;
  border: 1px solid #a7a7a7;
  background: linear-gradient(135deg, transparent 50%, #666 50%) 79px 5px / 2px 2px no-repeat, #efefef;
}

/* workspace */
.workspace {
  flex: 1;
  display: flex;
  background-color: #f0f0f0;
}

.dock {
  width: 220px;
  margin-right: 3px;
  display: flex;
  flex-direction: column;
  gap: 6px;
}

.panel h2 {
  display: flex;
  align-items: center;
  justify-content: space-between;
  padding: 0 2px;
  font-size: 9px;
  background-color: #b9cad9;
  color: #222;
}

.properties h2 {
  height: 17px;
}

.diagnostics h2 {
  height: 14px;
}

.panel-buttons {
  display: flex;
  align-items: center;
  gap: 4px;
}

.actions {
  display: flex;
  gap: 16px;
  padding: 1px 0 2px 54px;
}

.actions button {
  width: 26px;
  height: 15px;
  justify-content: center;
  border: 1px solid #b4b4b4;
  background-color: #e8e8e8;
}

.actions .on {
  border-color: #58a3d8;
  background-color: #c4e0f5;
}

.panel h3 {
  display: flex;
  align-items: center;
  gap: 3px;
  height: 12px;
  padding-left: 3px;
  font-size: 7px;
  font-weight: bold;
  background: linear-gradient(#f2f2f2, #b4b4b4);
}

.fold {
  width: 8px;
  height: 8px;
  fill: #f4f6ff;
  stroke: #6772a8;
}

.fold path {
  fill: none;
  stroke: #333c7d;
}

.fields {
  display: flex;
  flex-direction: column;
  gap: 1px;
  padding: 4px 2px;
  color: #7b7b7b;
}

.fields select {
  appearance: none;
  height: 13px;
  padding-left: 1px;
  border: 1px solid #d2d2d2;
}

.field {
  display: flex;
}

.field label {
  width: 41px;
  color: #a0a0a0;
}

.field input {
  flex: 1;
  height: 13px;
  padding-left: 3px;
  border: 1px solid #d2d2d2;
}

.check {
  display: flex;
  align-items: center;
  gap: 2px;
  color: #7b7b7b;
}

.check input {
  appearance: none;
  width: 7px;
  height: 7px;
  border: 1px solid #a8a8a8;
  background-color: #f5f5f5;
}

.check input:checked::after {
  content: '';
  display: block;
  width: 2px;
  height: 4px;
  margin: -1px 0 0 1px;
  border: solid #444;
  border-width: 0 1px 1px 0;
  transform: rotate(40deg);
}

.contours {
  height: 60px;
  margin: 6px 2px;
  padding: 0 2px;
  border: 1px solid #a5a5a5;
  background-color: #fff;
  list-style: none;
  color: #7b7b7b;
}

.options {
  padding: 4px 2px 6px;
}

.options .check {
  line-height: 10px;
}

.panel-tabs {
  display: flex;
  padding-left: 2px;
}

.panel-tabs button {
  height: 14px;
  padding: 0 3px 0 2px;
  gap: 2px;
}

.panel-tabs .active {
  border: 1px solid #c4c4c4;
  border-top: 0;
  background-color: #fff;
}

.diagnostics {
  flex: 1;
  display: flex;
  flex-direction: column;
}

.diagnostics table {
  width: 100%;
  table-layout: fixed;
  border-collapse: collapse;
}

.diagnostics th {
  height: 14px;
  padding: 0 1px;
  font-weight: normal;
  text-align: left;
  border-right: 1px solid #b4b4b4;
  border-bottom: 1px solid #b4b4b4;
}

.c1 {
  width: 17px;
}

.c2 {
  width: 11px;
}

.c3 {
  width: 90px;
}

.messages {
  flex: 1;
  background-color: #fff;
}

/* vertical tool strips */
.side-tools {
  flex: none;
  display: flex;
  flex-direction: column;
  align-items: center;
  padding-top: 3px;
  background: linear-gradient(90deg, #fafbff, #c6ccdf);
}

.side-tools.left {
  width: 20px;
}

.side-tools.right {
  width: 18px;
}

.side-tools .grip {
  width: 14px;
  height: 1px;
  margin: 0 0 2px;
  border-left: 0;
  border-top: 1px dotted #9aa0b0;
}

.side-tools button {
  flex: none;
  width: 18px;
  height: 18px;
  justify-content: center;
}

.side-tools .sep {
  flex: none;
  width: 14px;
  height: 1px;
  margin: 1px 0;
  background-color: #a9b0c4;
}

.side-tools .on {
  border: 1px solid #6bb3dc;
  background-color: #cfe8f6;
}

/* document area */
.document {
  flex: 1;
  min-width: 0;
  display: flex;
  flex-direction: column;
}

.tabs {
  display: flex;
  align-items: flex-end;
  height: 16px;
  padding-left: 1px;
  border-bottom: 3px solid #b5d3e6;
  background-color: #eef1f8;
}

.tabs button {
  height: 12px;
  padding: 0 2px;
  gap: 2px;
  border: 1px solid #93aec6;
  border-bottom: 0;
  border-left-color: #fff;
  background: linear-gradient(#e9f3fa, #b9d4e8);
  font-weight: bold;
  color: #444;
}

.tabs b {
  margin-left: 1px;
  color: #111;
}

.tabs .active {
  padding-left: 13px;
  background: linear-gradient(120deg, #eef1f8 9px, #93aec6 9px, #93aec6 10px, #fff 10px);
  color: #111;
}

.caret {
  margin: 0 3px 5px auto;
  border: 2px solid transparent;
  border-top: 3px solid #111;
  border-bottom: 0;
}

.view {
  flex: 1;
  display: grid;
  grid-template-columns: 1fr 11px;
  grid-template-rows: 1fr 11px;
  border: solid #a9c4d8;
  border-width: 0 3px 2px 2px;
}

.scene {
  display: block;
  width: 100%;
  height: 0;
  min-height: 100%;
}

.edges {
  stroke: #2c3433;
  stroke-width: 1;
  stroke-linejoin: round;
}

.scroll {
  display: flex;
  align-items: center;
  justify-content: space-between;
  background-color: #f0f0f0;
  font-size: 9px;
  line-height: 9px;
}

.scroll span {
  padding: 1px;
  font-family: 'DejaVu Sans', sans-serif;
}

.vertical {
  flex-direction: column;
}

.vertical i {
  width: 9px;
  height: 34px;
  background-color: #cdcdcd;
}

.horizontal i {
  width: 54px;
  height: 9px;
  background-color: #cdcdcd;
}

/* status bar */
.statusbar {
  display: flex;
  align-items: center;
  height: 12px;
  padding-left: 1px;
  background-color: #f0f0f0;
}

.mode {
  width: 295px;
}

.hint {
  flex: 1;
}

.cell {
  width: 62px;
  height: 10px;
  border-left: 1px solid #cfcfcf;
}

.cell.last {
  width: 75px;
}
```
